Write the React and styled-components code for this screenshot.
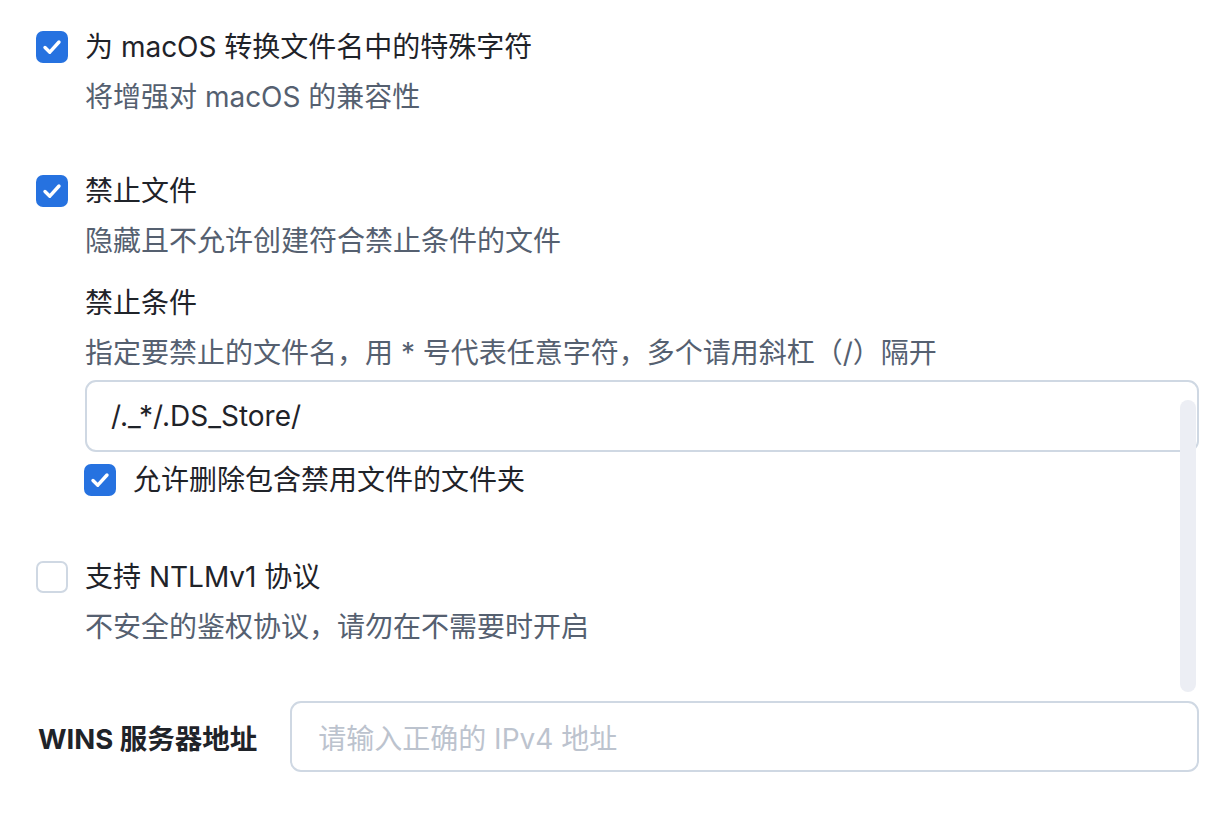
import React from 'react';
import styled, { createGlobalStyle } from 'styled-components';

const GlobalStyle = createGlobalStyle`
  html, body {
    margin: 0;
    padding: 0;
    background: #ffffff;
  }
  body {
    font-family: "Inter", "Noto Sans CJK SC", "Noto Sans", sans-serif;
    color: #1f2329;
  }
`;

const Page = styled.div`
  position: relative;
  width: 1214px;
  height: 814px;
  box-sizing: border-box;
  padding: 23px 15px 0 36px;
  overflow: hidden;
`;

const Options = styled.div`
  display: flex;
  flex-direction: column;
`;

const Option = styled.div`
  display: flex;
  align-items: flex-start;
  gap: 17px;
  margin-top: ${(p) => p.top || 0}px;
`;

const Box = styled.span`
  flex: none;
  width: 32px;
  height: 32px;
  box-sizing: border-box;
  border-radius: 7px;
  margin-top: ${(p) => p.offset ?? 8}px;
  display: flex;
  align-items: center;
  justify-content: center;
  background: ${(p) => (p.checked ? '#2672e0' : '#ffffff')};
  border: ${(p) => (p.checked ? 'none' : '2px solid #cfd8e3')};
`;

const Body = styled.div`
  flex: 1;
  display: flex;
  flex-direction: column;
  min-width: 0;
`;

const Label = styled.div`
  font-size: 28px;
  line-height: 48px;
  color: #1f2329;
  white-space: nowrap;
`;

const Desc = styled.div`
  font-size: 28px;
  line-height: 48px;
  margin-top: 2px;
  color: #556070;
  white-space: nowrap;
`;

const Sub = styled.div`
  display: flex;
  flex-direction: column;
  margin-top: 14px;
`;

const TextInput = styled.div`
  height: 72px;
  box-sizing: border-box;
  margin-top: 3px;
  border: 2px solid #cfd8e3;
  border-radius: 11px;
  display: flex;
  align-items: center;
  padding-left: 24px;
  font-size: 28px;
  color: ${(p) => (p.placeholder ? '#bcc3ce' : '#1f2329')};
  background: #fff;
`;

const SubCheck = styled.div`
  display: flex;
  align-items: center;
  gap: 17px;
  margin-top: 10px;
  margin-left: -1px;
  font-size: 28px;
  line-height: 36px;
  color: #1f2329;
`;

const Field = styled.div`
  display: flex;
  align-items: center;
  gap: 33px;
  margin-top: 50px;
  margin-left: 2px;
`;

const FieldLabel = styled.div`
  flex: none;
  font-size: 27.5px;
  font-weight: 700;
  color: #1f2329;
  white-space: nowrap;
`;

const FieldInput = styled(TextInput)`
  flex: 1;
  margin-top: 0;
  height: 71px;
  padding-left: 26px;
`;

const Scrollbar = styled.div`
  position: absolute;
  left: 1180px;
  top: 400px;
  width: 16px;
  height: 292px;
  border-radius: 8px;
  background: #eceef4;
`;

function Check({ checked, offset }) {
  return (
    <Box checked={checked} offset={offset}>
      {checked && (
        <svg width="32" height="32" viewBox="0 0 32 32" fill="none">
          <path
            d="M9 16.5 L13.8 21.2 L23 11"
            stroke="#fff"
            strokeWidth="3.4"
            strokeLinecap="round"
            strokeLinejoin="round"
          />
        </svg>
      )}
    </Box>
  );
}

export default function App() {
  return (
    <>
      <GlobalStyle />
      <Page>
        <Options>
          <Option>
            <Check checked />
            <Body>
              <Label>为 macOS 转换文件名中的特殊字符</Label>
              <Desc>将增强对 macOS 的兼容性</Desc>
            </Body>
          </Option>

          <Option top={46}>
            <Check checked />
            <Body>
              <Label>禁止文件</Label>
              <Desc>隐藏且不允许创建符合禁止条件的文件</Desc>
              <Sub>
                <Label>禁止条件</Label>
                <Desc>指定要禁止的文件名，用 * 号代表任意字符，多个请用斜杠（/）隔开</Desc>
                <TextInput>/._*/.DS_Store/</TextInput>
                <SubCheck>
                  <Check checked offset={0} />
                  允许删除包含禁用文件的文件夹
                </SubCheck>
              </Sub>
            </Body>
          </Option>

          <Option top={55}>
            <Check />
            <Body>
              <Label>支持 NTLMv1 协议</Label>
              <Desc>不安全的鉴权协议，请勿在不需要时开启</Desc>
            </Body>
          </Option>
        </Options>

        <Field>
          <FieldLabel>WINS 服务器地址</FieldLabel>
          <FieldInput placeholder>请输入正确的 IPv4 地址</FieldInput>
        </Field>
        <Scrollbar />
      </Page>
    </>
  );
}
